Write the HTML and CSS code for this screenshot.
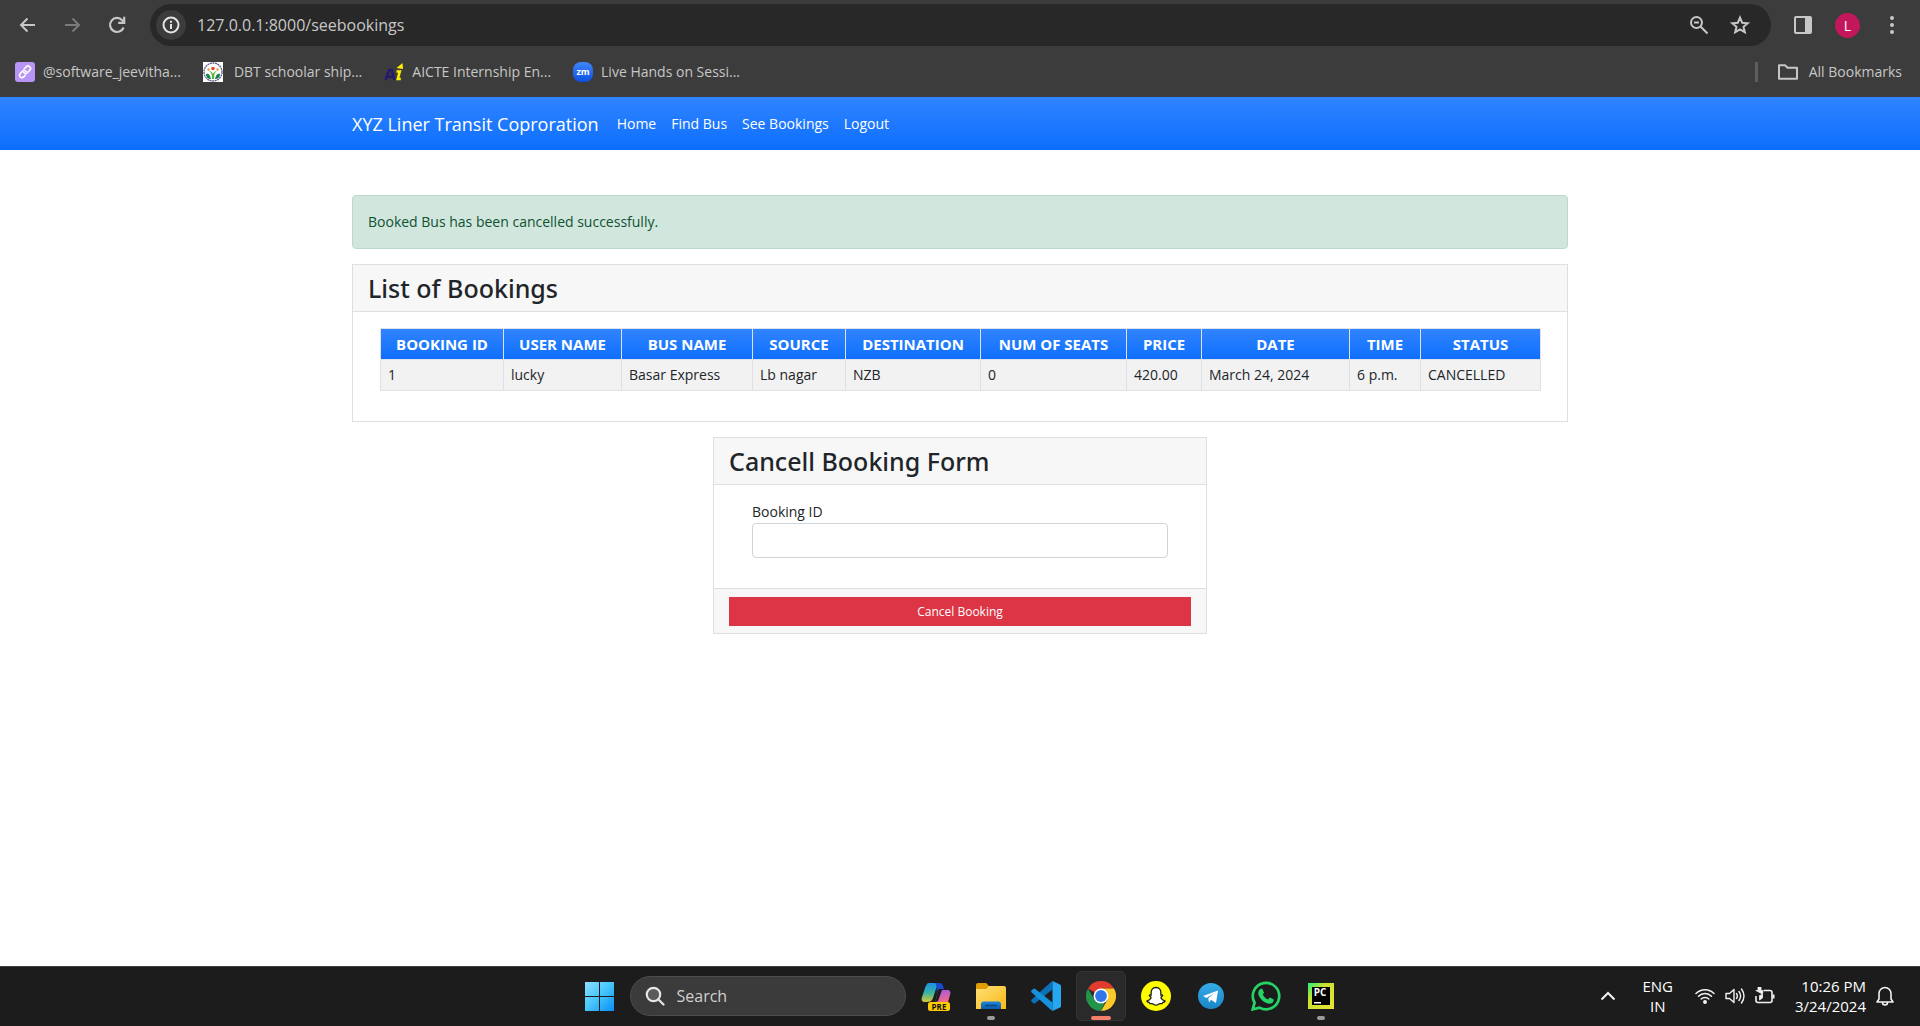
FILE: index.html
```html
<!DOCTYPE html>
<html lang="en">
<head>
<meta charset="utf-8">
<meta name="viewport" content="width=device-width, initial-scale=1">
<title>XYZ Liner Transit Coproration</title>
<link rel="stylesheet" href="styles.css">
</head>
<body>
<header class="browser">
  <div class="toolbar">
    <div class="toolbar-nav">
      <button class="icon-btn" type="button" aria-label="Back"><svg width="20" height="20" viewBox="0 0 20 20" fill="none" stroke="#c7c7c7" stroke-width="2"><path d="M17 10H3M9.500 3.500 3 10l6.500 6.500"/></svg></button>
      <button class="icon-btn" type="button" aria-label="Forward"><svg width="20" height="20" viewBox="0 0 20 20" fill="none" stroke="#7b7b7b" stroke-width="2"><path d="M2 10h14M9.500 3.500 16 10l-6.500 6.500"/></svg></button>
      <button class="icon-btn" type="button" aria-label="Reload"><svg width="20" height="20" viewBox="0 0 20 20" fill="none" stroke="#c7c7c7" stroke-width="2.200"><path d="M15.600 12.500A7 7 0 1 1 14.200 5.200L16 7"/><path d="M16.200 1.800v6h-6"/></svg></button>
    </div>
    <div class="omnibox">
      <button class="site-info" type="button" aria-label="Site information"><svg width="18" height="18" viewBox="0 0 18 18" fill="none" stroke="#e3e3e3" stroke-width="2"><circle cx="9" cy="9" r="7.500"/><path d="M9 8v5M9 4.800v2"/></svg></button>
      <input class="address" type="text" aria-label="Address" value="127.0.0.1:8000/seebookings">
      <button class="icon-btn" type="button" aria-label="Zoom"><svg width="20" height="20" viewBox="0 0 20 20" fill="none" stroke="#c7c7c7" stroke-width="2"><circle cx="7.500" cy="7.500" r="5.500"/><path d="m11.500 11.500 7 7M5 7.500h5"/></svg></button>
      <button class="icon-btn" type="button" aria-label="Bookmark this tab"><svg width="22" height="22" viewBox="0 0 22 22" fill="none" stroke="#c7c7c7" stroke-width="2"><path d="m11 3.600 2.200 5.100 5.500.5-4.200 3.600 1.300 5.400-4.800-2.900-4.800 2.900 1.300-5.400-4.200-3.600 5.500-.5z"/></svg></button>
    </div>
    <div class="toolbar-end">
      <button class="icon-btn" type="button" aria-label="Side panel"><svg width="20" height="20" viewBox="0 0 20 20"><rect x="2" y="2" width="16" height="16" rx="1" fill="none" stroke="#c7c7c7" stroke-width="2"/><path d="M12 2h6v16h-6z" fill="#c7c7c7"/></svg></button>
      <button class="avatar" type="button" aria-label="Profile">L</button>
      <button class="icon-btn" type="button" aria-label="Menu"><svg width="20" height="20" viewBox="0 0 20 20" fill="#c7c7c7"><circle cx="10" cy="3" r="2"/><circle cx="10" cy="10" r="2"/><circle cx="10" cy="17" r="2"/></svg></button>
    </div>
  </div>
  <nav class="bookmarks" aria-label="Bookmarks">
    <a class="bookmark" href="#"><svg width="20" height="20" viewBox="0 0 20 20"><rect width="20" height="20" rx="3" fill="#b794f6"/><g fill="none" stroke="#fff" stroke-width="1.600" stroke-linecap="round"><path d="m9 7 2.200-2.100a2.400 2.400 0 0 1 3.600 3.300l-2.500 2.600a2.400 2.400 0 0 1-3.500-.3"/><path d="m10.500 13-1.800 1.900a2.400 2.400 0 0 1-3.500-3.400l2.400-2.400a2.400 2.400 0 0 1 3.500.4"/></g></svg>@software_jeevitha...</a>
    <a class="bookmark bookmark-wide" href="#"><svg width="20" height="20" viewBox="0 0 20 20"><path fill="#fff" d="M0 0h20v20H0z"/><circle cx="10" cy="10" r="9" fill="#fff" stroke="#5b5b83" stroke-width="1.300" stroke-dasharray="2 .6"/><path d="M3 12c2-1 4 0 5 5-3 0-5-2-5-5zM17 12c-2-1-4 0-5 5 3 0 5-2 5-5z" fill="#15824b"/><path d="M6 9c2 1 3 3 3 8h2c0-5 1-7 3-8-2 0-3 1-4 3C9 10 8 9 6 9z" fill="#55b530"/><circle cx="10" cy="6.500" r="1.800" fill="#e8442c"/><circle cx="5.500" cy="7.500" r="1.200" fill="#f0962e"/><circle cx="14.500" cy="7.500" r="1.200" fill="#f0962e"/></svg>DBT schoolar ship...</a>
    <a class="bookmark" href="#"><svg width="20" height="20" viewBox="0 0 20 20"><path d="m1.500 18 3.800-10h2.400l2.800 10M3.500 14.800h5" fill="none" stroke="#241a70" stroke-width="2.600"/><path d="m12.500 6 6-5 .5 6z" fill="#ffef00"/><path d="M12.500 9.500h3.300l-2 7.500h3" fill="none" stroke="#ffef00" stroke-width="2.600"/></svg>AICTE Internship En...</a>
    <a class="bookmark" href="#"><svg width="20" height="20" viewBox="0 0 20 20"><defs><linearGradient id="zm" x2="0" y2="1"><stop stop-color="#4087fc"/><stop offset="1" stop-color="#0b4fe0"/></linearGradient></defs><rect width="20" height="20" rx="8" fill="url(#zm)"/><text class="logo-text" x="10" y="13" font-size="9" text-anchor="middle" fill="#fff">zm</text></svg>Live Hands on Sessi...</a>
    <a class="bookmark all-bookmarks" href="#"><svg width="22" height="20" viewBox="0 0 22 20" fill="none" stroke="#c7c7c7" stroke-width="2" stroke-linejoin="round"><path d="M2 3.200h6l2.500 2.500H20v11H2z"/></svg>All Bookmarks</a>
  </nav>
</header>

<nav class="navbar" aria-label="Main">
  <div class="container navbar-inner">
    <a class="brand" href="#">XYZ Liner Transit Coproration</a>
    <a class="nav-link" href="#">Home</a>
    <a class="nav-link" href="#">Find Bus</a>
    <a class="nav-link" href="#">See Bookings</a>
    <a class="nav-link" href="#">Logout</a>
  </div>
</nav>

<main class="container content">
  <div class="alert" role="status">Booked Bus has been cancelled successfully.</div>

  <section class="card">
    <h1 class="card-header">List of Bookings</h1>
    <div class="card-body">
      <table class="bookings">
        <colgroup><col class="c-id"><col class="c-user"><col class="c-bus"><col class="c-source"><col class="c-dest"><col class="c-seats"><col class="c-price"><col class="c-date"><col class="c-time"><col class="c-status"></colgroup>
        <thead>
          <tr><th>BOOKING ID</th><th>USER NAME</th><th>BUS NAME</th><th>SOURCE</th><th>DESTINATION</th><th>NUM OF SEATS</th><th>PRICE</th><th>DATE</th><th>TIME</th><th>STATUS</th></tr>
        </thead>
        <tbody>
          <tr><td>1</td><td>lucky</td><td>Basar Express</td><td>Lb nagar</td><td>NZB</td><td>0</td><td>420.00</td><td>March 24, 2024</td><td>6 p.m.</td><td>CANCELLED</td></tr>
        </tbody>
      </table>
    </div>
  </section>

  <form class="card card-narrow">
    <h2 class="card-header">Cancell Booking Form</h2>
    <div class="form-body">
      <label class="form-label" for="booking-id">Booking ID</label>
      <input class="form-input" id="booking-id" type="text">
    </div>
    <div class="card-footer"><button class="btn-danger" type="button">Cancel Booking</button></div>
  </form>
</main>

<footer class="taskbar">
  <div class="taskbar-apps">
    <button class="task" type="button" aria-label="Start"><svg width="30" height="30" viewBox="0 0 30 30"><defs><linearGradient id="win" x2="1" y2="1"><stop stop-color="#8be0ff"/><stop offset=".5" stop-color="#45c4fb"/><stop offset="1" stop-color="#0a8df6"/></linearGradient></defs><path fill="url(#win)" d="M0 1h14v14H0zm15 0h14v14H15zM0 16h14v14H0zm15 0h14v14H15z"/></svg></button>
    <label class="search"><svg width="20" height="20" viewBox="0 0 20 20" fill="#5a5a5a" stroke="#e6e6e6" stroke-width="2.200" stroke-linecap="round"><circle cx="8.500" cy="8.500" r="6.700"/><path d="m13.500 13.500 5 5"/></svg><input class="search-input" type="text" placeholder="Search" aria-label="Search"></label>
    <button class="task" type="button" aria-label="Copilot preview"><svg width="30" height="30" viewBox="0 0 30 30"><defs><linearGradient id="cpa" x2="0" y2="1"><stop stop-color="#1e8fea"/><stop offset=".5" stop-color="#33b4a5"/><stop offset="1" stop-color="#d9c636"/></linearGradient><linearGradient id="cpb" x2=".3" y2="1"><stop stop-color="#9a58f0"/><stop offset="1" stop-color="#f06a8d"/></linearGradient></defs><path d="M8 2h11c-3 2-4 5-5 9l-2 6c-1 3-3 4-6 4H4c-3 0-4-2-3-5l3-9c1-3 2-5 4-5z" fill="url(#cpa)"/><path d="M14 2h5c2 0 3 2 4 6h-4c-2 0-3 1-4 4 1-5 1-8-1-10z" fill="#1849cf"/><path d="M18 9h8c3 0 4 2 3 5l-2 7h-9l-4-1c2-2 2-9 4-11z" fill="url(#cpb)"/><path d="M18 9h3l-4 11h-3c2-2 2-9 4-11z" fill="#1c1c1c"/><rect x="7" y="21" width="22" height="9" rx="2.500" fill="#fc0"/><text class="logo-text" x="18" y="28.500" font-size="8" text-anchor="middle" fill="#111">PRE</text></svg></button>
    <button class="task task-open" type="button" aria-label="File Explorer"><svg width="30" height="30" viewBox="0 0 30 30"><defs><linearGradient id="fe" x2="1" y2="1"><stop stop-color="#ffe07a"/><stop offset="1" stop-color="#f9b912"/></linearGradient><linearGradient id="fb" x2="0" y2="1"><stop stop-color="#1f86d9"/><stop offset="1" stop-color="#0a5cae"/></linearGradient></defs><path d="M0 4q0-2 2-2h8l3 3v5H0z" fill="#e09d06"/><path d="M0 8h10l3-3h15q2 0 2 2v21H0z" fill="url(#fe)"/><path d="M5 28v-5q0-2.500 2.500-2.500h15Q25 20.500 25 23v5z" fill="url(#fb)"/><path d="M9 24.500h12" stroke="#0b447f" stroke-width="1.500"/></svg></button>
    <button class="task" type="button" aria-label="Visual Studio Code"><svg width="30" height="30" viewBox="0 0 30 30"><path d="M21.500 0v8.500L4 22.300q-.8.600-1.600 0l-1.900-1.700q-.8-.9 0-1.800L20 1z" fill="#0a70b8"/><path d="M21.500 30v-8.500L4 7.700q-.8-.6-1.600 0L.500 9.400q-.8.900 0 1.800L20 29z" fill="#1592db"/><path d="m21.500 0 7.500 3.500q1 .5 1 1.600v19.800q0 1.100-1 1.600L21.500 30z" fill="#27a7f2"/></svg></button>
    <button class="task task-active" type="button" aria-label="Google Chrome"><svg width="30" height="30" viewBox="0 0 30 30"><path d="M15 15 2 7.500A15 15 0 0 1 28 7.500H15z" fill="#e33b2e"/><path d="M15 7.500h13A15 15 0 0 1 15 30l6.500-11.200z" fill="#fdc829"/><path d="M15 30A15 15 0 0 1 2 7.500l6.500 11.200 6.500 3.800 4-1z" fill="#219447"/><circle cx="15" cy="15" r="7.500" fill="#fff"/><circle cx="15" cy="15" r="5.900" fill="#3277ea"/></svg></button>
    <button class="task" type="button" aria-label="Snapchat"><svg width="30" height="30" viewBox="0 0 30 30"><circle cx="15" cy="15" r="15" fill="#fffc00"/><path d="M15 6.500c3.500 0 5 2.500 4.900 5.500l-.1 2c.8.200 1.700-.3 1.900.4.200.9-1.800 1.200-1.800 2 .5 1.900 2 3 4 3.500.6.800-1 1.300-2.200 1.600-.5.300-.2 1-.8 1.100-.8.100-1.700-.3-2.700.2-1 .6-1.700 1.400-3.200 1.400s-2.200-.8-3.200-1.400c-1-.5-1.900-.1-2.700-.2-.6-.1-.3-.8-.8-1.100-1.200-.3-2.800-.8-2.200-1.600 2-.5 3.500-1.600 4-3.500 0-.8-2-1.100-1.800-2 .2-.7 1.100-.2 1.900-.4l-.1-2c-.1-3 1.400-5.500 4.900-5.500z" fill="#fff" stroke="#1b1b1b" stroke-width="1.300"/></svg></button>
    <button class="task" type="button" aria-label="Telegram"><svg width="26" height="26" viewBox="0 0 26 26"><defs><linearGradient id="tg" x2="0" y2="1"><stop stop-color="#35abe6"/><stop offset="1" stop-color="#1a86c8"/></linearGradient></defs><circle cx="13" cy="13" r="13" fill="url(#tg)"/><path d="M5 13 20 7.500 18 20l-5-3.200-2 2.700-.7-4.200 6-5L8.500 15z" fill="#fff"/></svg></button>
    <button class="task" type="button" aria-label="WhatsApp"><svg width="30" height="30" viewBox="0 0 30 30"><path d="m1.700 28.300 1.900-6.600A13.200 13.200 0 1 1 8.600 26.600z" fill="none" stroke="#25d366" stroke-width="2.700"/><path d="M9.700 7.800h1.600l1.700 4-1.300 2q2 3.500 5.300 4.800l1.800-2.100 3.900 1.900q.2 4.100-4.500 4.300c-5 0-11.100-6.200-11-10.700q.1-2.900 2.500-4.200z" fill="#25d366"/></svg></button>
    <button class="task task-open" type="button" aria-label="PyCharm"><svg width="26" height="26" viewBox="0 0 26 26"><defs><linearGradient id="pc" x2="1" y2="1"><stop stop-color="#21f07c"/><stop offset=".35" stop-color="#c9e22e"/><stop offset="1" stop-color="#e9e432"/></linearGradient></defs><path fill="url(#pc)" d="M0 0h26v26H0z"/><path d="M4 4h18v18H4z"/><text class="logo-text" x="12" y="13" font-size="10" text-anchor="middle" fill="#fff">PC</text><path d="M6 19h7v1.500H6z" fill="#fff"/></svg></button>
  </div>
  <div class="tray">
    <button class="icon-btn" type="button" aria-label="Show hidden icons"><svg width="16" height="16" viewBox="0 0 16 16" fill="none" stroke="#f2f2f2" stroke-width="2"><path d="m1.500 11.500 6.500-6.500 6.500 6.500"/></svg></button>
    <div class="tray-text lang">ENG<br>IN</div>
    <div class="tray-icons">
      <svg width="20" height="20" viewBox="0 0 20 20" fill="none" stroke="#f2f2f2" stroke-width="1.500" stroke-linecap="round"><path d="M1 7.500a12.500 12.500 0 0 1 18 0M3.500 10.300a9 9 0 0 1 13 0M6.200 13a5.300 5.300 0 0 1 7.600 0"/><circle cx="10" cy="16" r="1.200" fill="#f2f2f2"/></svg>
      <svg width="20" height="20" viewBox="0 0 20 20" fill="none" stroke="#f2f2f2" stroke-width="1.400" stroke-linejoin="round" stroke-linecap="round"><path d="M1 7.500h3.500L9 3.500v13l-4.500-4H1zM11.500 7.500q1.700 2.500 0 5M14 5.500q3.200 4.500 0 9M16.500 3q5 7 0 14"/></svg>
      <svg width="20" height="20" viewBox="0 0 20 20" fill="none" stroke="#f2f2f2" stroke-width="1.600"><path d="M8.500 4.500H15q2 0 2 2v8q0 2-2 2H3q-2 0-2-2V10"/><path d="M18.500 8.500v4" stroke-width="2"/><path d="M3 1v3h3V1M.800 4.500h7V7Q7 9.500 4.500 9.500V14l3-2V8z" fill="#f2f2f2" stroke-width=".8"/></svg>
    </div>
    <div class="tray-text clock">10:26 PM<br>3/24/2024</div>
    <button class="icon-btn" type="button" aria-label="Notifications"><svg width="18" height="20" viewBox="0 0 18 20" fill="none" stroke="#f2f2f2" stroke-width="1.600" stroke-linejoin="round"><path d="M3 13V7.500a6 6 0 0 1 12 0V13l2 3H1zM6.500 16.500a2.500 2.500 0 0 0 5 0"/></svg></button>
  </div>
</footer>
</body>
</html>
```
FILE: styles.css
```css
* { box-sizing: border-box; }

body {
  margin: 0;
  min-height: 100vh;
  display: flex;
  flex-direction: column;
  background: #fff;
  color: #212529;
  font-family: "Open Sans", "Noto Sans", sans-serif;
  font-size: 14px;
  line-height: 22px;
}

a { color: inherit; text-decoration: none; }
svg { display: block; flex: none; }
button, input { font: inherit; color: inherit; margin: 0; }
.logo-text { font-family: "Open Sans", sans-serif; font-weight: 700; }

.icon-btn {
  display: flex;
  align-items: center;
  justify-content: center;
  padding: 0;
  border: 0;
  background: none;
}

/* Browser chrome */
.browser { background: #3c3c3c; color: #c7c7c7; }

.toolbar {
  display: flex;
  align-items: center;
  padding: 4px 18px 0;
}
.toolbar-nav { display: flex; gap: 25px; width: 132px; }
.omnibox {
  flex: 1;
  display: flex;
  align-items: center;
  gap: 20px;
  height: 42px;
  padding: 0 20px 0 6px;
  border-radius: 21px;
  background: #282828;
}
.site-info {
  display: flex;
  align-items: center;
  justify-content: center;
  width: 30px;
  height: 30px;
  padding: 0;
  border: 0;
  border-radius: 50%;
  background: #3c3c3c;
}
.address {
  flex: 1;
  min-width: 0;
  margin-left: -9px;
  padding: 0;
  border: 0;
  outline: 0;
  background: none;
  font-size: 16px;
}
.toolbar-end {
  display: flex;
  align-items: center;
  gap: 22px;
  padding-left: 22px;
}
.avatar {
  width: 25px;
  height: 25px;
  padding: 0;
  border: 0;
  border-radius: 50%;
  background: #c2185b;
  color: #fff;
  font-size: 14px;
  line-height: 25px;
}

.bookmarks {
  display: flex;
  align-items: center;
  gap: 22px;
  height: 51px;
  padding: 0 18px 0 15px;
}
.bookmark { display: flex; align-items: center; gap: 8px; white-space: nowrap; }
.bookmark-wide { gap: 11px; }
.all-bookmarks {
  gap: 10px;
  margin-left: auto;
  padding-left: 19px;
  border-left: 3px solid #5e5e5e;
  line-height: 20px;
}

/* Site navigation */
.container { width: 100%; max-width: 1216px; margin: 0 auto; }
.navbar { background: #0d6efd linear-gradient(#3084ff, #0d6efd); color: #fff; }
.navbar-inner { display: flex; align-items: center; gap: 15px; height: 53px; }
.brand { margin-right: 3px; font-size: 18px; }

/* Page content */
.content { flex: 1; padding: 45px 0; }
.alert {
  margin-bottom: 15px;
  padding: 15px;
  border: 1px solid #badbcc;
  border-radius: 4px;
  background: #d1e7dd;
  color: #0f5132;
}
.card { margin-bottom: 15px; border: 1px solid #dfdfdf; background: #fff; }
.card-narrow { max-width: 494px; margin: 0 auto; }
.card-header {
  margin: 0;
  padding: 7px 15px;
  border-bottom: 1px solid #dfdfdf;
  background: #f7f7f7;
  font-family: "Noto Sans", "Open Sans", sans-serif;
  font-size: 25px;
  font-weight: 500;
  line-height: 32px;
}
.card-body { padding: 16px 27px 30px; }

.bookings { width: 100%; table-layout: fixed; border-collapse: collapse; }
.bookings th, .bookings td {
  height: 31px;
  padding: 4px 7px;
  border: 1px solid #dee2e6;
  white-space: nowrap;
}
.bookings thead { background: #0d6efd linear-gradient(#3084ff, #0d6efd); color: #fff; }
.bookings th { font-size: 15px; font-weight: 700; text-align: center; }
.bookings td { background: #f2f2f2; }
.c-id { width: 123px; }
.c-user { width: 118px; }
.c-bus { width: 131px; }
.c-source { width: 93px; }
.c-dest { width: 135px; }
.c-seats { width: 146px; }
.c-price { width: 75px; }
.c-date { width: 148px; }
.c-time { width: 71px; }
.c-status { width: 120px; }

.form-body { padding: 16px 38px 30px; }
.form-label { display: block; }
.form-input {
  display: block;
  width: 100%;
  height: 35px;
  padding: 5px 11px;
  border: 1px solid #ced4da;
  border-radius: 4px;
  background: #fff;
}
.card-footer { padding: 8px 15px 7px; border-top: 1px solid #dfdfdf; background: #f7f7f7; }
.btn-danger {
  display: block;
  width: 100%;
  height: 29px;
  padding: 0;
  border: 0;
  background: #dc3545;
  color: #fff;
  font-size: 12px;
}

/* Desktop taskbar */
.taskbar {
  display: grid;
  grid-template-columns: 1fr auto 1fr;
  align-items: center;
  height: 60px;
  box-shadow: inset 0 1px #404040;
  background: #1c1c1c;
  color: #fff;
}
.taskbar-apps { grid-column: 2; display: flex; align-items: center; gap: 5px; }
.task {
  position: relative;
  display: flex;
  align-items: center;
  justify-content: center;
  width: 50px;
  height: 50px;
  padding: 0;
  border: 1px solid transparent;
  border-radius: 5px;
  background: none;
}
.task-active { border-color: #333; background: #2a2a2a; }
.task-open::after, .task-active::after {
  content: "";
  position: absolute;
  bottom: 0;
  left: 50%;
  width: 8px;
  height: 4px;
  margin-left: -4px;
  border-radius: 2px;
  background: #9a9a9a;
}
.task-active::after { width: 20px; margin-left: -10px; background: #f3806a; }
.search {
  display: flex;
  align-items: center;
  gap: 12px;
  width: 276px;
  height: 40px;
  padding: 0 14px;
  border: 1px solid #4c4c4c;
  border-radius: 20px;
  background: #3b3b3b;
}
.search-input {
  flex: 1;
  min-width: 0;
  padding: 0;
  border: 0;
  outline: 0;
  background: none;
  font-size: 16px;
}
.search-input::placeholder { color: #d0d0d0; opacity: 1; }

.tray {
  grid-column: 3;
  justify-self: end;
  display: flex;
  align-items: center;
  padding-right: 26px;
}
.tray-text { font-size: 15px; line-height: 20px; }
.lang { margin: 0 22px 0 26px; text-align: center; }
.tray-icons { display: flex; gap: 10px; }
.clock { margin: 0 10px 0 20px; text-align: right; }
```
